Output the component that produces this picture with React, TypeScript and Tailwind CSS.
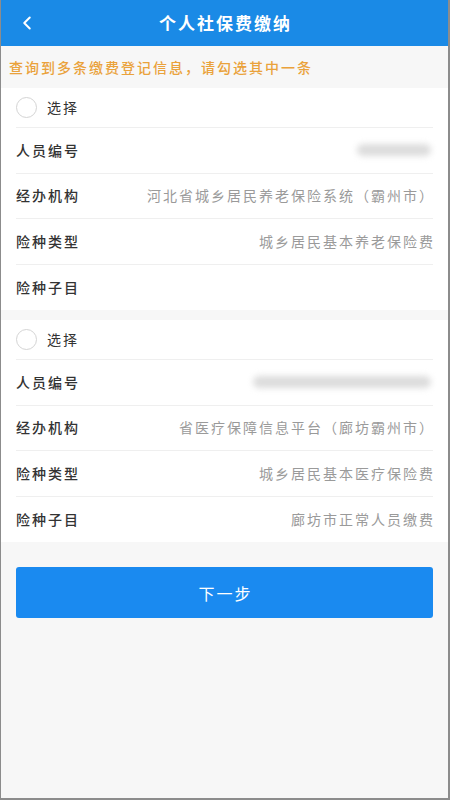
import { ChevronLeft } from "lucide-react";

type Row = { label: string; value?: string; blur?: number };

const records: Row[][] = [
  [
    { label: "人员编号", blur: 74 },
    { label: "经办机构", value: "河北省城乡居民养老保险系统（霸州市）" },
    { label: "险种类型", value: "城乡居民基本养老保险费" },
    { label: "险种子目" },
  ],
  [
    { label: "人员编号", blur: 178 },
    { label: "经办机构", value: "省医疗保障信息平台（廊坊霸州市）" },
    { label: "险种类型", value: "城乡居民基本医疗保险费" },
    { label: "险种子目", value: "廊坊市正常人员缴费" },
  ],
];

function RecordCard({ rows }: { rows: Row[] }) {
  return (
    <div className="bg-white px-[15px]">
      {/* select row */}
      <div className="flex h-[40px] items-center gap-[10px] border-b border-[#efefef]">
        <span className="h-[21px] w-[21px] rounded-full border border-[#d4d4d4] bg-white" />
        <span className="text-[14px] tracking-[2px] text-[#333]">选择</span>
      </div>
      {rows.map((row, i) => (
        <div
          key={row.label}
          className={`flex h-[45.5px] items-center justify-between ${
            i < rows.length - 1 ? "border-b border-[#efefef]" : ""
          }`}
        >
          <span className="text-[14px] font-medium tracking-[2px] text-[#333]">{row.label}</span>
          {row.blur ? (
            <span
              className="mr-[2px] h-[12px] rounded-full bg-[#dcdcdc] blur-[3px]"
              style={{ width: row.blur }}
            />
          ) : (
            <span className="-mr-[2px] text-[14px] tracking-[2px] text-[#9a9a9a]">{row.value}</span>
          )}
        </div>
      ))}
    </div>
  );
}

export default function App() {
  return (
    <div
      className="flex h-[800px] w-[450px] flex-col overflow-hidden border-b-2 border-l border-r-2 border-[#8c8c8c] bg-[#f7f7f7]"
      style={{ fontFamily: '"Noto Sans CJK SC", "Noto Sans", sans-serif' }}
    >
      {/* header */}
      <div className="relative flex h-[46px] shrink-0 items-center justify-center bg-[#1a8ae6]">
        <ChevronLeft className="absolute left-[15px] text-white" size={22} strokeWidth={2.2} />
        <h1 className="pl-[2px] text-[17px] font-bold tracking-[2px] text-white">个人社保费缴纳</h1>
      </div>

      {/* notice */}
      <div className="flex h-[42px] shrink-0 items-center px-[8px]">
        <p className="text-[14px] font-medium tracking-[2px] text-[#eaa23b]">
          查询到多条缴费登记信息，请勾选其中一条
        </p>
      </div>

      <div className="flex flex-col gap-[10px]">
        {records.map((rows, i) => (
          <RecordCard key={i} rows={rows} />
        ))}
      </div>

      <div className="px-[15px] pt-[25px]">
        <button className="flex h-[51px] w-full items-center justify-center rounded-[3px] bg-[#1a8af0] pl-[2px] text-[16px] tracking-[2px] text-white">
          下一步
        </button>
      </div>
    </div>
  );
}
